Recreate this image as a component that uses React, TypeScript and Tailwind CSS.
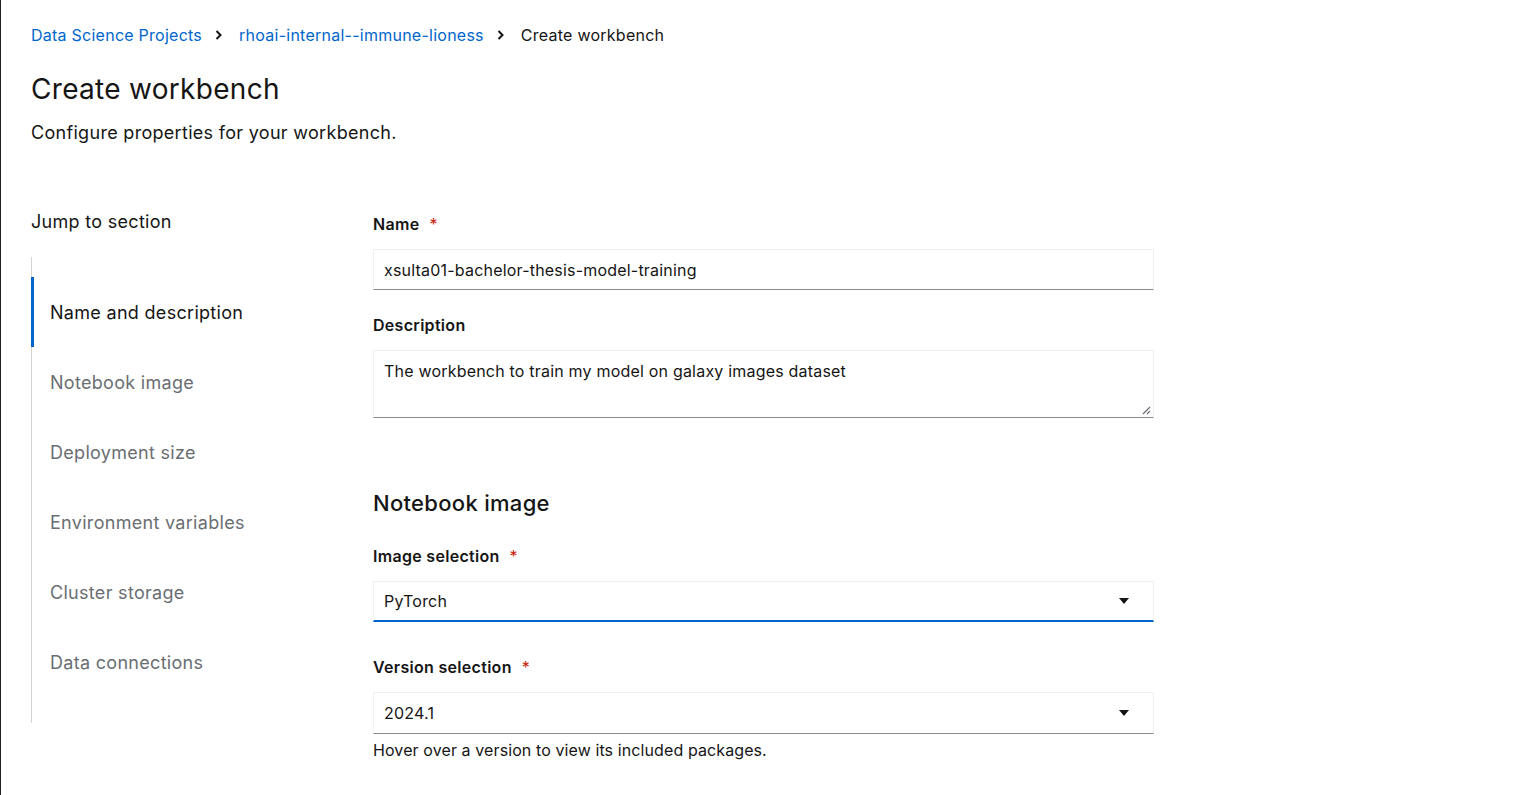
import React from "react";

const font = { fontFamily: 'Inter, "Open Sans", sans-serif' };

const navItems = [
  "Name and description",
  "Notebook image",
  "Deployment size",
  "Environment variables",
  "Cluster storage",
  "Data connections",
];

const Caret = () => (
  <svg width="10" height="6" viewBox="0 0 10 6" className="fill-[#151515]">
    <path d="M0 0 H10 L5 6 Z" />
  </svg>
);

const Chevron = () => (
  <svg width="8" height="10" viewBox="0 0 8 10" className="ml-[13px] mr-[16px]">
    <path d="M1.5 1 L5.5 5 L1.5 9" fill="none" stroke="#151515" strokeWidth="2" />
  </svg>
);

const Label = ({ text, required }: { text: string; required?: boolean }) => (
  <div className="flex items-center h-6 text-[16px] font-semibold text-[#151515]">
    {text}
    {required && <span className="ml-2.5 text-[#c9190b] font-normal">*</span>}
  </div>
);

const Select = ({ value, active }: { value: string; active?: boolean }) => (
  <div
    className={`flex items-center justify-between pl-2.5 pr-6 border border-[#f0f0f0] text-[16px] tracking-[0.2px] text-[#151515] ${
      active ? "h-[41px] border-b-2 border-b-[#0066cc]" : "h-[42px] border-b-[#8a8d90]"
    }`}
  >
    <span>{value}</span>
    <Caret />
  </div>
);

export default function App() {
  return (
    <div className="flex min-h-[795px] bg-white tracking-[0.3px]" style={font}>
      <div className="w-px bg-[#212427] shrink-0" />
      <div className="flex-1 pl-[30px] pt-[23px]">
        {/* breadcrumb */}
        <nav className="flex items-center h-6 text-[16px] tracking-[0.25px]">
          <a className="text-[#0066cc]">Data Science Projects</a>
          <Chevron />
          <a className="text-[#0066cc]">rhoai-internal--immune-lioness</a>
          <Chevron />
          <span className="text-[#151515]">Create workbench</span>
        </nav>

        <h1 className="mt-[24px] text-[28px] leading-[36px] text-[#151515]">Create workbench</h1>
        <p className="mt-[13px] text-[18px] leading-[26px] text-[#151515]">
          Configure properties for your workbench.
        </p>

        <div className="flex mt-[63px]">
          {/* jump nav */}
          <div className="w-[342px] shrink-0">
            <div className="text-[18px] leading-[26px] text-[#151515]">Jump to section</div>
            <ul className="mt-[22px] border-l border-[#d2d2d2] pt-5 pb-[26px]">
              {navItems.map((item, i) => (
                <li
                  key={item}
                  className={`flex items-center h-[70px] pl-[16px] text-[18px] -ml-px ${
                    i === 0
                      ? "border-l-[3px] border-[#0066cc] text-[#151515]"
                      : "border-l-[3px] border-transparent text-[#6a6e73]"
                  }`}
                >
                  {item}
                </li>
              ))}
            </ul>
          </div>

          {/* form */}
          <div className="w-[781px] pt-[3px]">
            <Label text="Name" required />
            <div className="mt-[13px] flex items-center h-[41px] pl-2.5 border border-[#f0f0f0] border-b-[#8a8d90] text-[16px] tracking-[0.2px] text-[#151515]">
              xsulta01-bachelor-thesis-model-training
            </div>

            <div className="mt-[23px]">
              <Label text="Description" />
            </div>
            <div className="relative mt-[13px] h-[68px] pl-2.5 pt-[8px] border border-[#f0f0f0] border-b-[#8a8d90] text-[16px] tracking-[0.2px] text-[#151515]">
              The workbench to train my model on galaxy images dataset
              <svg width="9" height="9" viewBox="0 0 9 9" className="absolute right-0.5 bottom-0.5">
                <path d="M8 1 L1 8 M8 5 L5 8" stroke="#6a6e73" strokeWidth="1.2" />
              </svg>
            </div>

            <h2 className="mt-[70px] text-[22px] leading-[30px] font-medium text-[#151515]">
              Notebook image
            </h2>

            <div className="mt-[26px]">
              <Label text="Image selection" required />
            </div>
            <div className="mt-[13px]">
              <Select value="PyTorch" active />
            </div>

            <div className="mt-[33px]">
              <Label text="Version selection" required />
            </div>
            <div className="mt-[13px]">
              <Select value="2024.1" />
            </div>
            <div className="mt-[4px] text-[16px] leading-[24px] tracking-[0.1px] text-[#151515]">
              Hover over a version to view its included packages.
            </div>
          </div>
        </div>
      </div>
    </div>
  );
}
